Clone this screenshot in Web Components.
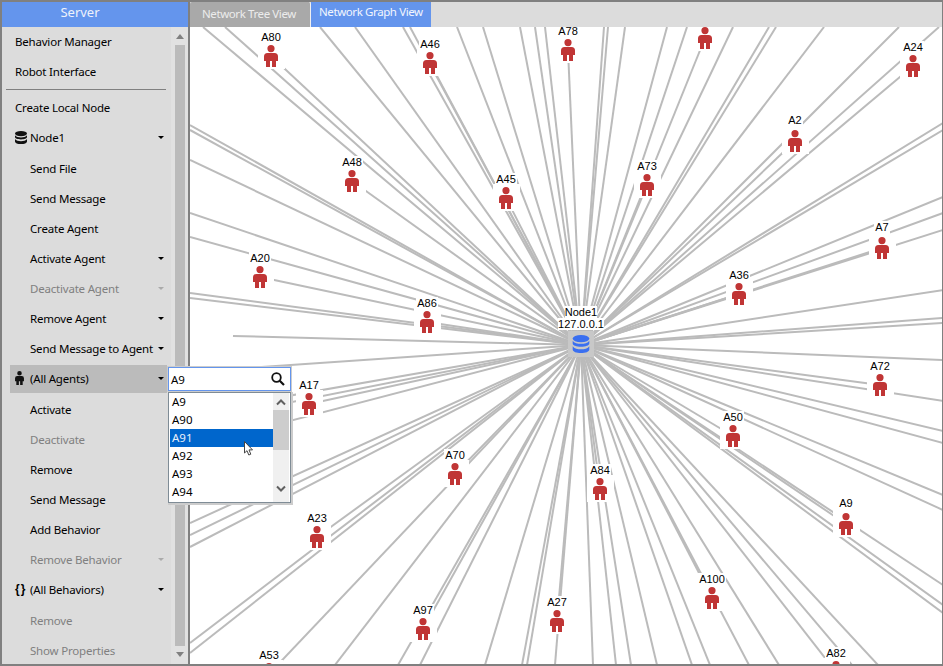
<!DOCTYPE html>
<html>
<head>
<meta charset="utf-8">
<title>Network Graph View</title>
<style>
html, body { margin: 0; padding: 0; background: #fff; }
body { font-family: "Noto Sans", "Liberation Sans", sans-serif; }
</style>
</head>
<body>
<app-shell>
    <side-menu slot="side">
        <menu-row>Behavior Manager</menu-row>
        <menu-row>Robot Interface</menu-row>
        <menu-sep></menu-sep>
        <menu-row>Create Local Node</menu-row>
        <menu-row icon="db" arrow>Node1</menu-row>
        <menu-row child nudge>Send File</menu-row>
        <menu-row child>Send Message</menu-row>
        <menu-row child>Create Agent</menu-row>
        <menu-row child arrow>Activate Agent</menu-row>
        <menu-row child arrow disabled>Deactivate Agent</menu-row>
        <menu-row child arrow>Remove Agent</menu-row>
        <menu-row child arrow>Send Message to Agent</menu-row>
        <menu-row icon="person" arrow active>(All Agents)</menu-row>
        <menu-row child nudge>Activate</menu-row>
        <menu-row child disabled>Deactivate</menu-row>
        <menu-row child>Remove</menu-row>
        <menu-row child>Send Message</menu-row>
        <menu-row child>Add Behavior</menu-row>
        <menu-row child arrow disabled>Remove Behavior</menu-row>
        <menu-row icon="braces" arrow>(All Behaviors)</menu-row>
        <menu-row child nudge disabled>Remove</menu-row>
        <menu-row child disabled>Show Properties</menu-row>
    </side-menu>
    <tab-strip slot="tabs">
        <tab-button>Network Tree View</tab-button>
        <tab-button selected>Network Graph View</tab-button>
    </tab-strip>
    <graph-view slot="main"></graph-view>
    <agent-picker slot="over" value="A9" items="A9,A90,A91,A92,A93,A94" current="A91"></agent-picker>
</app-shell>

<script>
const DB_PATHS = `<ellipse cx="6" cy="2.6" rx="6" ry="2.6"/><path d="M0 4.2C1 5.9 3.6 6.4 6 6.4s5-.5 6-2.2v1.9C12 7.6 9.3 8.4 6 8.4S0 7.6 0 6.1z"/><path d="M0 8.1C1 9.8 3.6 10.3 6 10.3s5-.5 6-2.2v2.3C12 12 9.3 13 6 13S0 12 0 10.4z"/>`;
const PERSON_PATH = "M7 0a3.6 3.6 0 1 1 0 7.2a3.6 3.6 0 0 1 0-7.2zM3.5 8h7Q14 8 14 11.5V16h-2v6H8v-6H6v6H2v-6H0v-4.5Q0 8 3.5 8z";

const ICONS = {
    db: `<svg width="12" height="13" viewBox="0 0 12 13"><g fill="#111">${DB_PATHS}</g></svg>`,
    person: `<svg width="9" height="14" viewBox="0 0 14 22"><path fill="#111" d="${PERSON_PATH}"/></svg>`
};

class AppShell extends HTMLElement {
    constructor() {
        super();
        this.attachShadow({ mode: "open" });
        this.shadowRoot.innerHTML = `
<style>
:host {
    display: flex;
    position: relative;
    box-sizing: border-box;
    width: 943px;
    height: 666px;
    overflow: hidden;
    border: 2px solid #808080;
    border-right-width: 1px;
    background: #fff;
}
.side { width: 186px; flex: none; border-right: 2px solid #808080; display: flex; }
.main { flex: 1; min-width: 0; display: flex; flex-direction: column; }
</style>
<div class="side"><slot name="side"></slot></div>
<div class="main"><slot name="tabs"></slot><slot name="main"></slot></div>
<slot name="over"></slot>`;
    }
}

class SideMenu extends HTMLElement {
    constructor() {
        super();
        this.attachShadow({ mode: "open" });
        this.shadowRoot.innerHTML = `
<style>
:host {
    display: flex;
    flex-direction: column;
    width: 186px;
    background: #dcdcdc;
    font-size: 11.5px;
    letter-spacing: -0.2px;
    color: #000;
}
.head {
    box-sizing: border-box;
    height: 25px;
    flex: none;
    background: #6495ed;
    color: #eef2fb;
    font-size: 13px;
    letter-spacing: 0;
    line-height: 21px;
    text-align: center;
    padding-right: 30px;
}
.body { flex: 1; display: flex; min-height: 0; }
.list { width: 169px; flex: none; display: flex; flex-direction: column; }
.bar {
    flex: 1;
    background: #e1e1e1;
    display: flex;
    flex-direction: column;
    align-items: center;
    padding: 7px 0;
    box-sizing: border-box;
    gap: 6px;
}
.thumb { width: 10px; flex: 1; background: #bbb; }
.up, .down { width: 0; height: 0; border-left: 4.5px solid transparent; border-right: 4.5px solid transparent; }
.up { border-bottom: 5px solid #808080; }
.down { border-top: 5px solid #808080; }
</style>
<div class="head">Server</div>
<div class="body">
    <div class="list"><slot></slot></div>
    <div class="bar"><div class="up"></div><div class="thumb"></div><div class="down"></div></div>
</div>`;
    }
}

class MenuRow extends HTMLElement {
    constructor() {
        super();
        this.attachShadow({ mode: "open" });
    }

    connectedCallback() {
        const name = this.getAttribute("icon");
        let icon = "";
        if (name === "braces") {
            icon = `<span class="ico braces">{}</span>`;
        } else if (name) {
            icon = `<span class="ico">${ICONS[name]}</span>`;
        }
        const arrow = this.hasAttribute("arrow") ? `<span class="arrow"></span>` : "";
        this.shadowRoot.innerHTML = `
<style>
:host {
    display: flex;
    flex: none;
    align-items: center;
    box-sizing: border-box;
    height: 30px;
    margin: 0 4px 0 8px;
    padding: 0 3px 2px 5px;
    white-space: nowrap;
}
:host([child]) { padding-left: 20px; }
:host([nudge]) { margin-top: 1px; }
:host([disabled]) { color: #808080; }
:host([active]) { background: #bbb; height: 28px; margin-top: 1px; margin-bottom: 1px; }
.ico { width: 15px; flex: none; display: flex; align-items: center; }
.braces { font-weight: 700; font-size: 12px; font-family: "Liberation Sans", sans-serif; letter-spacing: 1px; }
.arrow {
    margin-left: auto;
    width: 0;
    height: 0;
    border-left: 3px solid transparent;
    border-right: 3px solid transparent;
    border-top: 3px solid currentColor;
}
:host([disabled]) .arrow { border-top-color: #aaa; }
</style>
${icon}<slot></slot>${arrow}`;
    }
}

class MenuSep extends HTMLElement {
    constructor() {
        super();
        this.attachShadow({ mode: "open" });
        this.shadowRoot.innerHTML = `
<style>
:host { display: block; flex: none; height: 1px; margin: 2px 5px 3px 4px; background: #808080; }
</style>`;
    }
}

class TabStrip extends HTMLElement {
    constructor() {
        super();
        this.attachShadow({ mode: "open" });
        this.shadowRoot.innerHTML = `
<style>
:host {
    display: flex;
    flex: none;
    height: 25px;
    background: #dcdcdc;
    font-size: 11.5px;
    letter-spacing: -0.4px;
}
</style>
<slot></slot>`;
    }
}

class TabButton extends HTMLElement {
    constructor() {
        super();
        this.attachShadow({ mode: "open" });
        this.shadowRoot.innerHTML = `
<style>
:host {
    display: flex;
    align-items: center;
    box-sizing: border-box;
    width: 121px;
    padding: 0 0 3px 12px;
    background: #a9a9a9;
    color: #ececec;
    border-radius: 2px 2px 0 0;
    border-right: 1px solid #f0f0f0;
    white-space: nowrap;
}
:host([selected]) {
    width: 120px;
    padding: 0 0 7px 8px;
    background: #6495ed;
    color: #f2f5fd;
    border-right: 0;
    border-radius: 0;
}
</style>
<slot></slot>`;
    }
}

// far ends of the edges whose agents are off screen, in page coordinates
const OFF_SCREEN = [
    [203,27],[225,27],[320,27],[355,27],[403,27],[410,27],[457,27],[483,27],[520,27],[535,27],[545,27],
    [604,27],[608,27],[625,27],[667,27],[687,27],[733,27],[769,27],[776,27],[824,27],[899,27],[939,27],
    [943,123],[943,130],[943,197],[943,213],[943,230],[943,290],[943,318],[943,323],
    [943,360],[943,401],[943,431],[943,443],[943,495],[943,510],[943,585],[943,605],[943,613],
    [593,665],[616,665],[631,665],[657,665],[692,665],[710,665],[749,665],[779,665],[852,665],[878,665],
    [335,665],[398,665],[420,665],[485,665],[522,665],[527,665],[555,665],
    [190,125],[190,130],[190,160],[190,213],[190,237],[190,293],[190,298],[233,336],
    [190,372],[190,413],[190,422],[190,447],[190,523],[190,535],[190,547],[190,643],[190,653]
];

const AGENTS = [
    ["A80",271,56],["A46",430,63],["A78",568,50],["",705,38],["A24",913,66],
    ["A48",352,181],["A45",506,198],["A73",647,185],["A2",795,141],["A7",882,248],
    ["A36",739,294],["A20",260,277],["A86",427,322],["A17",309,404],["A72",880,385],
    ["A50",733,436],["A70",455,474],["A84",600,489],["A9",846,524],["A23",317,537],
    ["A100",712,598],["A97",423,629],["A27",557,621],["A53",269,674],["A82",836,672]
];

const CENTER = [581, 345];

class GraphView extends HTMLElement {
    constructor() {
        super();
        this.attachShadow({ mode: "open" });
    }

    connectedCallback() {
        const ends = OFF_SCREEN.concat(AGENTS.map((a) => [a[1], a[2]]));
        const lines = ends
            .map(([x, y]) => `<line x1="${CENTER[0]}" y1="${CENTER[1]}" x2="${x}" y2="${y}"/>`)
            .join("");
        const nodes = AGENTS
            .map(([name, x, y]) => `<graph-node label="${name}" style="left:${x - 220}px;top:${y - 52}px"></graph-node>`)
            .join("");
        this.shadowRoot.innerHTML = `
<style>
:host {
    display: block;
    flex: 1;
    position: relative;
    overflow: hidden;
    background: #fff;
}
svg { display: block; }
line { stroke: #bbb; stroke-width: 2; }
.hub { position: absolute; left: 348px; top: 279px; width: 86px; display: flex; flex-direction: column; align-items: center;
    font: 11px/12px "Liberation Sans", sans-serif; color: #000; }
.hub span { background: #fff; }
.hub div { width: 26px; height: 26px; margin-top: 1px; background: #c8c8c8; display: flex; align-items: center; justify-content: center; }
</style>
<svg width="752" height="637" viewBox="190 27 752 637">${lines}</svg>
${nodes}
<div class="hub">
    <span>Node1</span><span>127.0.0.1</span>
    <div><svg width="18" height="18" viewBox="0 0 12 13"><g fill="#3a6ff0">${DB_PATHS}</g></svg></div>
</div>`;
    }
}

class GraphNode extends HTMLElement {
    constructor() {
        super();
        this.attachShadow({ mode: "open" });
    }

    connectedCallback() {
        const label = this.getAttribute("label");
        // one-digit names sit 2px higher than the others in the reference
        const lift = label.length === 2 ? "margin-top:-2px;" : "";
        const drop = label.length === 2 ? "margin-top:0;" : "";
        this.shadowRoot.innerHTML = `
<style>
:host {
    position: absolute;
    display: flex;
    flex-direction: column;
    align-items: center;
    width: 60px;
    font: 11px/13px "Liberation Sans", sans-serif;
    color: #000;
}
.label { height: 13px; }
.label span { display: block; background: #fff; padding: 0 1px; }
.box { width: 27px; height: 27px; margin-top: -2px; background: #fff; display: flex; align-items: flex-start; justify-content: center; padding-top: 3px; box-sizing: border-box; }
</style>
<div class="label" style="${lift}"><span>${label}</span></div>
<div class="box" style="${drop}"><svg width="14" height="22" viewBox="0 0 14 22"><path fill="#c03535" d="${PERSON_PATH}"/></svg></div>`;
    }
}

class AgentPicker extends HTMLElement {
    constructor() {
        super();
        this.attachShadow({ mode: "open" });
    }

    connectedCallback() {
        const current = this.getAttribute("current");
        const rows = this.getAttribute("items").split(",")
            .map((t) => `<div class="item${t === current ? " on" : ""}">${t}</div>`)
            .join("");
        this.shadowRoot.innerHTML = `
<style>
:host {
    position: absolute;
    left: 166px;
    top: 365px;
    width: 123px;
    display: flex;
    flex-direction: column;
    gap: 1px;
    font-size: 11.5px;
    color: #000;
}
.search {
    box-sizing: border-box;
    height: 24px;
    background: #fff;
    border: 1px solid #6495ed;
    box-shadow: 0 0 0 1px #ccc;
    display: flex;
    align-items: center;
    padding: 0 5px 0 2px;
    justify-content: space-between;
}
.pop {
    box-sizing: border-box;
    height: 111px;
    background: #fff;
    border: 1px solid #7f8c96;
    box-shadow: 1px 1px 0 1px #ccc;
    display: flex;
    padding: 0 1px;
}
.items { flex: 1; }
.item { height: 18px; line-height: 18px; padding-left: 2px; }
.item.on { background: #0066cc; color: #e8f0fa; }
.bar { width: 16px; background: #f0f0f0; display: flex; flex-direction: column; align-items: center; }
.bar svg { flex: none; }
.thumb { width: 100%; height: 40px; background: #cdcdcd; margin-bottom: 31px; }
.cursor { position: absolute; left: 76px; top: 74px; }
</style>
<div class="search">
    <span>${this.getAttribute("value")}</span>
    <svg width="14" height="14" viewBox="0 0 14 14"><circle cx="5.5" cy="5.5" r="4.3" fill="none" stroke="#111" stroke-width="1.8"/><path d="M8.7 8.7L13 13" stroke="#111" stroke-width="2.2"/></svg>
</div>
<div class="pop">
    <div class="items">${rows}</div>
    <div class="bar">
        <svg width="16" height="17" viewBox="0 0 16 17"><path d="M4 11.5L8 7.5l4 4" fill="none" stroke="#606060" stroke-width="2"/></svg>
        <div class="thumb"></div>
        <svg width="16" height="17" viewBox="0 0 16 17"><path d="M4 5.5l4 4 4-4" fill="none" stroke="#606060" stroke-width="2"/></svg>
    </div>
</div>
<svg class="cursor" width="11" height="17" viewBox="0 0 11 17"><path d="M.5.5V12l2.5-2.3 1.8 4.3 2-.8-1.8-4.3H8.5z" fill="#fff" stroke="#444" stroke-width="1"/></svg>`;
    }
}

customElements.define("app-shell", AppShell);
customElements.define("side-menu", SideMenu);
customElements.define("menu-row", MenuRow);
customElements.define("menu-sep", MenuSep);
customElements.define("tab-strip", TabStrip);
customElements.define("tab-button", TabButton);
customElements.define("graph-view", GraphView);
customElements.define("graph-node", GraphNode);
customElements.define("agent-picker", AgentPicker);
</script>
</body>
</html>
